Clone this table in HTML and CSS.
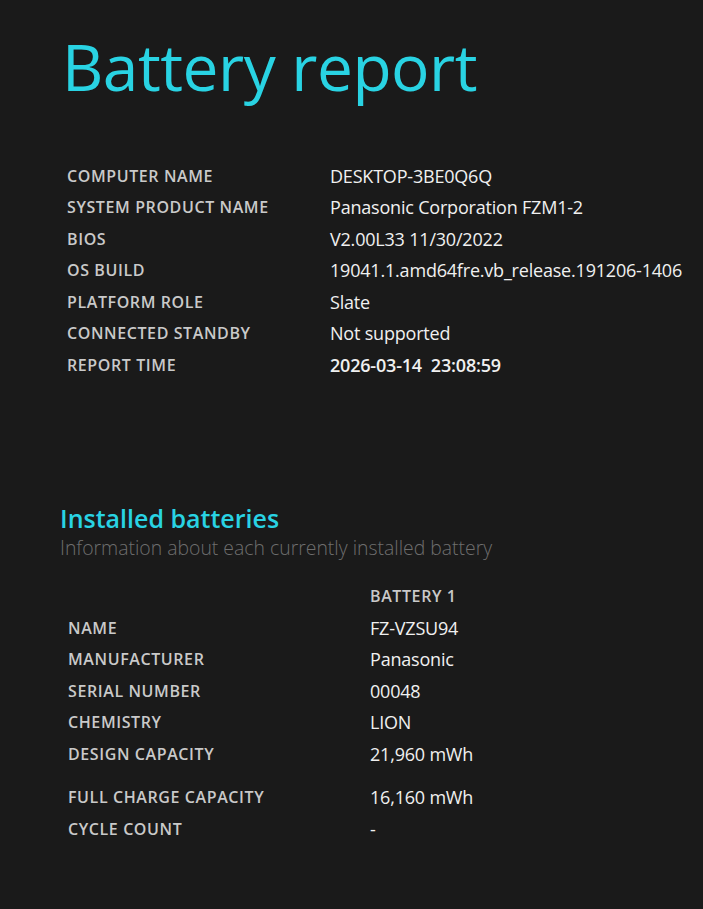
FILE: index.html
```html
<!DOCTYPE html>
<html lang="en">
<head>
    <meta charset="UTF-8">
    <meta name="viewport" content="width=device-width, initial-scale=1.0">
    <title>Battery report</title>
    <link rel="stylesheet" href="styles.css">
</head>
<body>
    <div class="page">
        <h1>Battery report</h1>

        <table class="info-table">
            <tr><td class="label">COMPUTER NAME</td><td>DESKTOP-3BE0Q6Q</td></tr>
            <tr><td class="label">SYSTEM PRODUCT NAME</td><td>Panasonic Corporation FZM1-2</td></tr>
            <tr><td class="label">BIOS</td><td>V2.00L33 11/30/2022</td></tr>
            <tr><td class="label">OS BUILD</td><td>19041.1.amd64fre.vb_release.191206-1406</td></tr>
            <tr><td class="label">PLATFORM ROLE</td><td>Slate</td></tr>
            <tr><td class="label">CONNECTED STANDBY</td><td>Not supported</td></tr>
            <tr><td class="label">REPORT TIME</td><td class="strong">2026-03-14&nbsp; 23:08:59</td></tr>
        </table>

        <h2>Installed batteries</h2>
        <div class="description">Information about each currently installed battery</div>

        <table class="battery-table">
            <tr><td></td><td class="label">BATTERY 1</td></tr>
            <tr><td class="label">NAME</td><td>FZ-VZSU94</td></tr>
            <tr><td class="label">MANUFACTURER</td><td>Panasonic</td></tr>
            <tr><td class="label">SERIAL NUMBER</td><td>00048</td></tr>
            <tr><td class="label">CHEMISTRY</td><td>LION</td></tr>
            <tr><td class="label">DESIGN CAPACITY</td><td>21,960 mWh</td></tr>
            <tr class="spaced"><td class="label">FULL CHARGE CAPACITY</td><td>16,160 mWh</td></tr>
            <tr><td class="label">CYCLE COUNT</td><td>-</td></tr>
        </table>
    </div>
</body>
</html>
```

FILE: styles.css
```css
body {
    margin: 0;
    background: #1a1a1a;
    color: #f0f0f0;
    font-family: 'Open Sans', 'Noto Sans', sans-serif;
}

.page {
    padding: 19px 0 40px 60px;
}

h1 {
    margin: 0 0 0 2px;
    color: #29d3e3;
    font-size: 64px;
    font-weight: 400;
    line-height: 96px;
    letter-spacing: -0.5px;
}

table {
    border-collapse: collapse;
}

td {
    padding: 0;
    height: 31.5px;
    font-size: 18px;
    letter-spacing: -0.2px;
    vertical-align: middle;
    white-space: nowrap;
}

td.label {
    color: #c9c9c9;
    font-size: 16px;
    font-weight: 600;
    letter-spacing: 0.6px;
}

td.strong {
    font-weight: 600;
}

.info-table {
    margin: 45px 0 0 7px;
}

.info-table td.label {
    width: 263px;
}

h2 {
    margin: 122px 0 0 0;
    color: #29d3e3;
    font-size: 25px;
    font-weight: 600;
    line-height: 30px;
}

.description {
    color: #6e6e6e;
    font-size: 19.4px;
    font-weight: 300;
    line-height: 30px;
}

.battery-table {
    margin: 18px 0 0 8px;
}

.battery-table td:first-child {
    width: 302px;
}

.battery-table tr.spaced td {
    padding-top: 12px;
}
```
